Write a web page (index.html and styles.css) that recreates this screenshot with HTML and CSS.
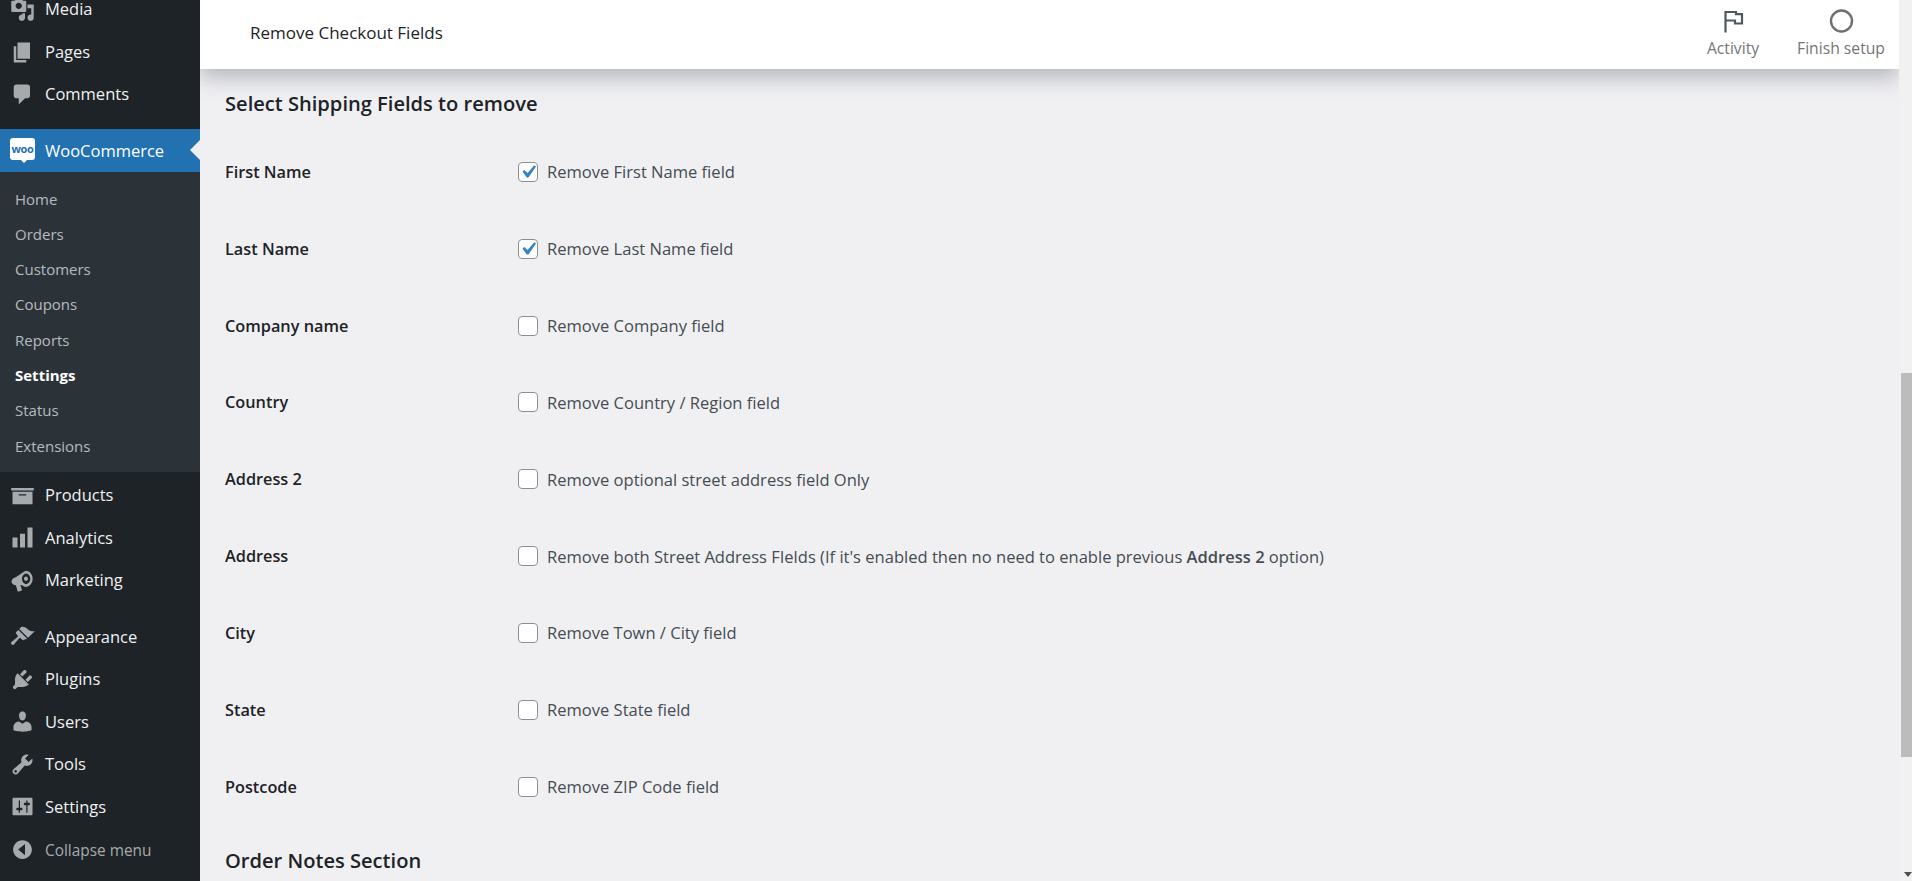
FILE: index.html
```html
<!DOCTYPE html>
<html lang="en">
<head>
<meta charset="utf-8">
<title>Remove Checkout Fields</title>
<link rel="stylesheet" href="styles.css">
</head>
<body>
<div class="app">
  <nav class="sidebar">
    <ul class="menu menu-top">
      <li class="item"><svg class="ico" viewBox="0 0 20 20"><path d="M13 11V4c0-.55-.45-1-1-1h-1.67L9 1H5L3.67 3H2c-.55 0-1 .45-1 1v7c0 .55.45 1 1 1h10c.55 0 1-.45 1-1zM7 4.5c1.38 0 2.5 1.12 2.5 2.5S8.38 9.5 7 9.5 4.5 8.38 4.5 7 5.62 4.5 7 4.5zM14 6h5v10.5c0 1.38-1.12 2.5-2.5 2.5S14 17.88 14 16.5s1.12-2.5 2.5-2.5c.17 0 .34.02.5.05V9h-3V6zm-4 8.05V13h2v3.5c0 1.38-1.12 2.5-2.5 2.5S7 17.88 7 16.5 8.12 14 9.5 14c.17 0 .34.02.5.05z"/></svg>Media</li>
      <li class="item"><svg class="ico" viewBox="0 0 20 20"><path d="M6 15V2h10v13H6zm-1 1h8v2H3V5h2v11z"/></svg>Pages</li>
      <li class="item"><svg class="ico" viewBox="0 0 20 20"><path d="M5 2h9c1.1 0 2 .9 2 2v7c0 1.1-.9 2-2 2h-2l-5 5v-5H5c-1.1 0-2-.9-2-2V4c0-1.1.9-2 2-2z"/></svg>Comments</li>
    </ul>
    <div class="item item-active"><span class="woo-logo">woo</span>WooCommerce</div>
    <ul class="submenu">
      <li>Home</li>
      <li>Orders</li>
      <li>Customers</li>
      <li>Coupons</li>
      <li>Reports</li>
      <li class="sub-current">Settings</li>
      <li>Status</li>
      <li>Extensions</li>
    </ul>
    <ul class="menu menu-woo">
      <li class="item"><svg class="ico" viewBox="0 0 20 20"><path d="M19 4v2H1V4h18zM2 7h16v10H2V7zm11 3V9H7v1h6z"/></svg>Products</li>
      <li class="item"><svg class="ico" viewBox="0 0 20 20"><path d="M18 18V2h-4v16h4zm-6 0V7H8v11h4zm-6 0v-8H2v8h4z"/></svg>Analytics</li>
      <li class="item"><svg class="ico" viewBox="0 0 20 20"><path d="M12.500 2.300c-.8.1-1.500.6-2.300 1.200L4.600 7.400C3 7.900 1.200 8.900 1.200 10.800c0 1.300.9 2.300 2.100 2.700l1.400.3 1.300 4.500c.1.400.5.6.9.5l2.100-.6c.4-.1.6-.5.5-.9l-1.200-3.700 1.800.3c.8.600 1.600 1.100 2.400 1.200 3 0 5.600-2.900 5.600-6.500s-2.700-6.400-5.600-6.300zm.4 2c1.900.1 3.300 2.100 3.300 4.300s-1.500 4.200-3.300 4.300c-1.800-.1-3.300-2.100-3.300-4.300s1.500-4.200 3.300-4.300zm-.100 2.500c-.9 0-1.600.8-1.600 1.800s.7 1.800 1.600 1.800 1.600-.8 1.600-1.800-.7-1.800-1.600-1.800z"/></svg>Marketing</li>
    </ul>
    <ul class="menu menu-bottom">
      <li class="item"><svg class="ico" viewBox="0 0 20 20"><path d="M14.480 11.060L7.410 3.990l1.500-1.500c.5-.56 2.300-.47 3.510.32 1.210.8 1.430 1.280 2.910 2.100 1.180.64 2.450 1.260 4.450.85zm-.71.71L6.700 4.700 4.930 6.470c-.39.39-.39 1.020 0 1.410l1.060 1.060c.39.39.39 1.030 0 1.420-.6.6-4.760 4.040-4.760 4.040-.51.46-.51 1.250-.02 1.730l.25.25c.48.49 1.260.47 1.720-.04 0 0 3.440-4.160 4.040-4.760.39-.39 1.030-.39 1.420 0l1.060 1.060c.39.39 1.020.39 1.410 0z"/></svg>Appearance</li>
      <li class="item"><svg class="ico" viewBox="0 0 20 20"><path d="M13.110 4.360L9.870 7.600 8 5.730l3.240-3.240c.35-.34 1.050-.2 1.560.32.52.51.66 1.210.31 1.550zm-8 1.770l.91-1.120 9.010 9.010-1.190.84c-.71.71-2.630 1.160-3.820 1.160H6.140L4.900 17.260c-.59.59-1.540.59-2.120 0-.59-.58-.59-1.530 0-2.120l1.240-1.240v-3.880c0-1.130.4-3.190 1.090-3.890zm7.260 3.970l3.240-3.240c.34-.35 1.040-.21 1.550.31.52.51.66 1.210.31 1.550l-3.240 3.250z"/></svg>Plugins</li>
      <li class="item"><svg class="ico" viewBox="0 0 20 20"><path d="M10 9.250c-2.270 0-2.730-3.440-2.730-3.440C7 4.020 7.820 2 9.970 2c2.160 0 2.980 2.020 2.710 3.810 0 0-.41 3.440-2.680 3.440zm0 2.570L12.720 10c2.390 0 4.520 2.330 4.520 4.530v2.490s-3.650 1.130-7.240 1.130c-3.650 0-7.240-1.130-7.240-1.130v-2.490c0-2.250 1.940-4.480 4.470-4.480z"/></svg>Users</li>
      <li class="item"><svg class="ico" viewBox="0 0 20 20"><path d="M16.680 9.770c-1.340 1.340-3.300 1.670-4.950.99l-5.410 6.520c-.99.99-2.590.99-3.580 0s-.99-2.590 0-3.570l6.520-5.420c-.68-1.650-.35-3.610.99-4.950 1.280-1.280 3.120-1.620 4.720-1.060l-2.890 2.890 2.820 2.820 2.860-2.870c.53 1.580.18 3.390-1.080 4.670zM3.810 16.210c.4.39 1.040.39 1.430 0 .4-.4.4-1.040 0-1.430-.39-.4-1.030-.4-1.430 0-.39.39-.39 1.030 0 1.430z"/></svg>Tools</li>
      <li class="item"><svg class="ico" viewBox="0 0 20 20"><path d="M18 16V4c0-.55-.45-1-1-1H3c-.55 0-1 .45-1 1v12c0 .55.45 1 1 1h14c.55 0 1-.45 1-1zM8 11h1c.55 0 1 .45 1 1s-.45 1-1 1H8v1.500c0 .28-.22.5-.5.5s-.5-.22-.5-.5V13H6c-.55 0-1-.45-1-1s.45-1 1-1h1V5.500c0-.28.22-.5.5-.5s.5.22.5.5V11zm5-2h-1c-.55 0-1-.45-1-1s.45-1 1-1h1V5.500c0-.28.22-.5.5-.5s.5.22.5.5V7h1c.55 0 1 .45 1 1s-.45 1-1 1h-1v5.500c0 .28-.22.5-.5.5s-.5-.22-.5-.5V9z"/></svg>Settings</li>
      <li class="item item-collapse"><svg class="ico" viewBox="0 0 20 20"><path d="M10 2.500c-4.140 0-7.500 3.360-7.500 7.500s3.360 7.500 7.500 7.500 7.500-3.360 7.500-7.500-3.360-7.500-7.500-7.500zM12 14.500 6.500 10 12 5.500z"/></svg>Collapse menu</li>
    </ul>
  </nav>

  <main class="main">
    <header class="topbar">
      <h1 class="page-title">Remove Checkout Fields</h1>
      <div class="actions">
        <div class="action action-activity">
          <svg class="action-ico" viewBox="0 0 27 27"><path d="M5.500 24.500V4H16v2.200h6v9.300h-7v-3H5.500" fill="none" stroke="#50575e" stroke-width="2.200"/></svg>
          <span>Activity</span>
        </div>
        <div class="action action-setup">
          <svg class="action-ico" viewBox="0 0 27 27"><circle cx="13.500" cy="13" r="10.500" fill="none" stroke="#6c7073" stroke-width="2.400"/></svg>
          <span>Finish setup</span>
        </div>
      </div>
    </header>
    <section class="content">
      <h2 class="section-title">Select Shipping Fields to remove</h2>
      <div class="fields">
        <div class="row"><span class="row-label">First Name</span><label class="check"><span class="box box-on"><svg viewBox="0 0 20 20"><path d="M14.830 4.890l1.340.94-5.810 8.380H9.020L5.780 9.670l1.340-1.250 2.570 2.400z"/></svg></span>Remove First Name field</label></div>
        <div class="row"><span class="row-label">Last Name</span><label class="check"><span class="box box-on"><svg viewBox="0 0 20 20"><path d="M14.830 4.890l1.340.94-5.810 8.380H9.020L5.780 9.670l1.340-1.250 2.570 2.400z"/></svg></span>Remove Last Name field</label></div>
        <div class="row"><span class="row-label">Company name</span><label class="check"><span class="box"></span>Remove Company field</label></div>
        <div class="row"><span class="row-label">Country</span><label class="check"><span class="box"></span>Remove Country / Region field</label></div>
        <div class="row"><span class="row-label">Address 2</span><label class="check"><span class="box"></span>Remove optional street address field Only</label></div>
        <div class="row"><span class="row-label">Address</span><label class="check"><span class="box"></span>Remove both Street Address FIelds (If it's enabled then no need to enable previous&nbsp;<b>Address 2</b>&nbsp;option)</label></div>
        <div class="row"><span class="row-label">City</span><label class="check"><span class="box"></span>Remove Town / City field</label></div>
        <div class="row"><span class="row-label">State</span><label class="check"><span class="box"></span>Remove State field</label></div>
        <div class="row"><span class="row-label">Postcode</span><label class="check"><span class="box"></span>Remove ZIP Code field</label></div>
      </div>
      <h2 class="section-title section-next">Order Notes Section</h2>
    </section>
  </main>

  <aside class="scrollbar">
    <div class="thumb"></div>
    <div class="arrow"></div>
  </aside>
</div>
</body>
</html>
```

FILE: styles.css
```css
* { box-sizing: border-box; }
html, body { margin: 0; height: 100%; overflow: hidden; }
body {
  font-family: "Open Sans", "Noto Sans", sans-serif;
  background: #f0f0f3;
  color: #1d2327;
}
ul { list-style: none; margin: 0; padding: 0; }

.app { display: flex; height: 881px; overflow: hidden; }

/* Sidebar */
.sidebar {
  width: 200px;
  flex: none;
  background: #1d2327;
  color: #f0f0f1;
  font-size: 16.5px;
  position: relative;
  z-index: 2;
}
.menu-top { margin-top: -13px; padding-bottom: 14px; }
.item {
  display: flex;
  align-items: center;
  height: 42.5px;
  padding: 1px 0 0 45px;
  position: relative;
  white-space: nowrap;
}
.ico {
  position: absolute;
  left: 10px;
  top: 10px;
  width: 25px;
  height: 25px;
  fill: #a7aaad;
}
.item-active {
  background: #2271b1;
  color: #fff;
  height: 43px;
}
.item-active::after {
  content: "";
  position: absolute;
  right: 0;
  top: 50%;
  margin-top: -10px;
  border: 10px solid transparent;
  border-left-width: 0;
  border-right-color: #f0f0f3;
}
.woo-logo {
  position: absolute;
  left: 10px;
  top: 9px;
  width: 25px;
  height: 22px;
  border-radius: 3px;
  background: #fff;
  color: #2271b1;
  font-size: 11px;
  font-weight: 700;
  line-height: 21px;
  text-align: center;
  letter-spacing: -0.4px;
}
.woo-logo::after {
  content: "";
  position: absolute;
  left: 11px;
  bottom: -3px;
  border: 3px solid transparent;
  border-bottom-width: 0;
  border-top-color: #fff;
}
.submenu {
  background: #2c3338;
  color: rgba(240, 246, 252, .7);
  font-size: 15px;
  padding: 9px 0 9px 15px;
}
.submenu li { height: 35.3px; line-height: 36.6px; }
.sub-current { color: #fff; font-weight: 700; }
.menu-woo { padding-top: 1px; }
.menu-bottom { padding-top: 14px; }
.item-collapse { color: #a7aaad; font-size: 15.4px; padding-top: 5px; }

/* Main */
.main { flex: 1; min-width: 0; display: flex; flex-direction: column; }
.topbar {
  height: 69px;
  flex: none;
  background: #fff;
  box-shadow: 0 8px 20px rgba(85, 93, 102, .4);
  position: relative;
  z-index: 1;
  display: flex;
  align-items: center;
  justify-content: space-between;
  padding-left: 50px;
}
.page-title {
  margin: 0 0 5px;
  font-size: 17px;
  font-weight: 400;
  color: #1d2327;
}
.actions { display: flex; height: 100%; }
.action {
  display: flex;
  flex-direction: column;
  align-items: center;
  padding-top: 8px;
  color: #757575;
  font-size: 15.7px;
}
.action-activity { width: 100px; }
.action-setup { width: 116px; }
.action-ico { width: 27px; height: 27px; margin-bottom: 2px; }

.content { padding: 0 0 0 25px; }
.section-title {
  margin: 21px 0 0;
  font-size: 20.1px;
  line-height: 27px;
  font-weight: 600;
  color: #1d2327;
}
.section-next { margin-top: 0; padding-top: 22px; }
.fields { padding-top: 16.5px; }
.row { display: flex; align-items: center; height: 76.85px; }
.row-label {
  width: 293px;
  font-size: 16.3px;
  font-weight: 600;
}
.check {
  display: flex;
  align-items: center;
  font-size: 16.55px;
  color: #454c52;
  white-space: nowrap;
}
.check b { font-weight: 600; }
.box {
  width: 20px;
  height: 20px;
  margin-right: 9px;
  border: 1px solid #8c8f94;
  border-radius: 4px;
  background: #fff;
  flex: none;
}
.box svg { display: block; width: 26px; height: 26px; margin: -4px; fill: #3582c4; }

/* Scrollbar */
.scrollbar {
  width: 13px;
  flex: none;
  background: #f1f1f1;
  padding: 373px 0 0 2px;
  position: relative;
  z-index: 2;
}
.thumb { height: 384px; background: #bcbcbc; }
.arrow {
  position: absolute;
  right: 0;
  bottom: 4px;
  border: 4px solid transparent;
  border-bottom-width: 0;
  border-top: 5px solid #505050;
}
```
